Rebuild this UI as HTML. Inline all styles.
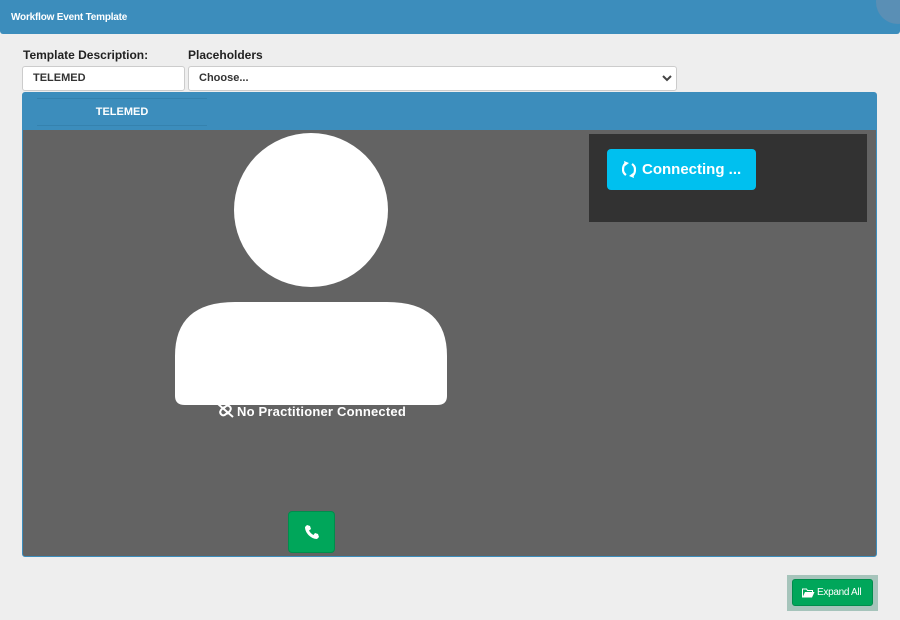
<!DOCTYPE html>
<html><head><style>
body{margin:0;width:900px;height:620px;background:#eeeeee;font-family:"Liberation Sans",sans-serif;position:relative;overflow:hidden}
.top{position:absolute;left:0;top:0;width:900px;height:34px;background:#3c8dbc;border-radius:0 0 3px 3px}
.top span{position:absolute;left:11px;top:12px;color:#fff;font-weight:bold;font-size:10px;letter-spacing:-0.2px}
.circ{position:absolute;left:876px;top:-20px;width:44px;height:44px;border-radius:50%;background:#5a8fb5}
.lbl{position:absolute;top:48px;font-size:12px;color:#222;font-weight:bold}
.inp{position:absolute;top:66px;height:25px;background:#fff;border:1px solid #ccc;border-radius:3px;box-sizing:border-box;font-size:11px;color:#333;padding:5px 0 0 10px;font-weight:bold}
.panel{position:absolute;left:22px;top:92px;width:855px;height:465px;background:#636363;border:1px solid #3c8dbc;box-sizing:border-box;border-radius:3px}
.ph{position:absolute;left:0;top:0;width:853px;height:37px;background:#3c8dbc}
.tab{position:absolute;left:14px;top:5px;width:170px;height:26px;border-top:1px solid #3582ae;border-bottom:1px solid #3582ae;color:#fff;font-size:11px;text-align:center;line-height:26px;font-weight:bold}
.dark{position:absolute;left:566px;top:41px;width:278px;height:88px;background:#323232}
.conn{position:absolute;left:18px;top:15px;width:149px;height:41px;background:#00c0ef;border-radius:4px;color:#fff;font-weight:bold;font-size:15px;line-height:41px;white-space:nowrap}
</style></head><body>
<div class="top"><span>Workflow Event Template</span></div><div class="circ"></div>
<div class="lbl" style="left:23px">Template Description:</div>
<div class="lbl" style="left:188px">Placeholders</div>
<div class="inp" style="left:22px;width:163px">TELEMED</div>
<div class="inp" style="left:188px;width:489px">Choose...<svg style="position:absolute;right:4px;top:8px" width="10" height="7" viewBox="0 0 10 7"><path d="M1 1l4 4 4-4" stroke="#444" stroke-width="2" fill="none"/></svg></div>
<div class="panel">
<div class="ph"><div class="tab">TELEMED</div></div>
<svg style="position:absolute;left:152px;top:40px" width="272" height="273"><circle cx="136" cy="77" r="77" fill="#fff"/><path d="M0 263 V223 Q0 169 60 169 H212 Q272 169 272 223 V263 Q272 272 262 272 H10 Q0 272 0 263Z" fill="#fff"/></svg>
<svg style="position:absolute;left:194px;top:310px" width="17" height="15" viewBox="0 0 17 15"><g stroke="#fff" stroke-width="2" fill="none"><path d="M7 4 L4 7 Q2 10 5 12 Q7 13 9 11 L10 10"/><path d="M10 11 L13 8 Q15 5 12 3 Q10 2 8 4 L7 5"/><path d="M1 1 L16 14"/></g></svg>
<div style="position:absolute;left:214px;top:311px;color:#fff;font-weight:bold;font-size:13px;letter-spacing:0.2px">No Practitioner Connected</div>
<div class="dark"><div class="conn"><svg style="position:absolute;left:15px;top:12px" width="14" height="17" viewBox="0 0 14 17"><g stroke="#fff" stroke-width="2.2" fill="none"><path d="M4 2 Q1 4 1 8.5 Q1 12 4 14"/><path d="M10 15 Q13 13 13 8.5 Q13 5 10 3"/></g><path d="M2 0 L7 2 L3 5Z M12 17 L7 15 L11 12Z" fill="#fff"/></svg><span style="position:absolute;left:35px">Connecting ...</span></div></div>
<div style="position:absolute;left:265px;top:418px;width:45px;height:40px;background:#00a65a;border:1px solid #008d4c;border-radius:4px"><svg style="position:absolute;left:15px;top:12px" width="16" height="16" viewBox="0 0 16 16"><path d="M3 1l3 1 1 3-2 1.5c1 2 2.5 3.5 4.5 4.5L11 9l3 1 1 3-2 2C7 15 1 9 1 3z" fill="#fff"/></svg></div>
</div>
<div style="position:absolute;left:787px;top:575px;width:91px;height:36px;background:#a6c4bb"></div>
<div style="position:absolute;left:792px;top:579px;width:81px;height:27px;background:#00a65a;border:1px solid #008d4c;border-radius:3px;box-sizing:border-box;color:#fff;font-size:10px;line-height:25px;white-space:nowrap"><svg style="position:absolute;left:9px;top:8px" width="13" height="10" viewBox="0 0 13 10"><path d="M0.5 9.5V1h4l1 1.5h5V4" stroke="#fff" fill="none"/><path d="M0.5 9.5 L3 4h9.5L10 9.5Z" fill="#fff"/></svg><span style="position:absolute;left:24px;letter-spacing:-0.3px">Expand All</span></div>
</body></html>
